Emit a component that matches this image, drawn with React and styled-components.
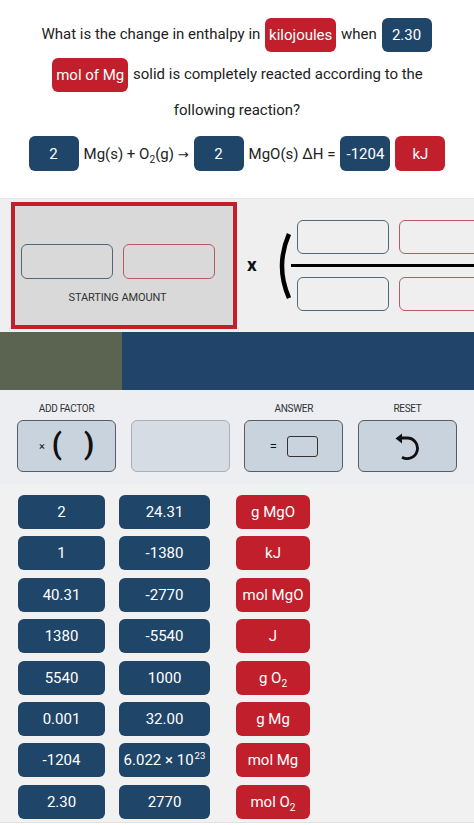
import React from "react";
import styled, { createGlobalStyle } from "styled-components";

const BLUE = "#1f4568";
const RED = "#c01f2b";

const GlobalStyle = createGlobalStyle`
  * { box-sizing: border-box; }
  body {
    margin: 0;
    background: #fff;
    font-family: Roboto, "Liberation Sans", Arial, sans-serif;
    color: #222;
  }
`;

const Page = styled.div`
  width: 474px;
  overflow: hidden;
`;

const Question = styled.section`
  background: #fff;
  padding: 15px 0 27px;
`;

const Prompt = styled.p`
  margin: 0;
  padding: 0 28px;
  text-align: center;
  font-size: 15px;
  line-height: 31px;
`;

const Chip = styled.span`
  display: inline-flex;
  align-items: center;
  justify-content: center;
  flex: none;
  min-width: 50px;
  height: 34px;
  padding: 0 4px;
  margin: 3px 1px;
  border-radius: 6px;
  vertical-align: middle;
  color: #fff;
  font-size: 15px;
  background: ${(p) => (p.$tone === "red" ? RED : BLUE)};
`;

const Equation = styled.div`
  display: flex;
  justify-content: center;
  align-items: center;
  gap: 5px;
  margin-top: 10px;
  font-size: 15px;
  white-space: nowrap;

  ${Chip} {
    margin: 0;
    height: 35px;
  }
`;

const EqText = styled.span`
  flex: none;
`;

const Arrow = styled.span`
  font-family: "DejaVu Sans", sans-serif;
  font-size: 13px;
`;

const Sub = styled.sub`
  font-size: 0.68em;
  line-height: 0;
  vertical-align: sub;
`;

const Workspace = styled.section`
  display: flex;
  align-items: center;
  height: 134px;
  padding-left: 11px;
  background: #efefef;
  border-top: 1px solid #e6e6e6;
  overflow: hidden;
`;

const StartBox = styled.div`
  flex: none;
  width: 226px;
  height: 127px;
  border: 4px solid ${RED};
  background: #d9d9d9;
  padding: 38px 0 0 6px;
`;

const StartInner = styled.div`
  width: 193px;
  display: flex;
  flex-direction: column;
  align-items: center;
`;

const SlotRow = styled.div`
  display: flex;
  gap: 10px;
`;

const Slot = styled.div`
  flex: none;
  width: 92px;
  height: 35px;
  border-radius: 6px;
  border: 1.5px solid ${(p) => (p.$tone === "red" ? "#b95a62" : "#52677b")};
`;

const SlotLabel = styled.div`
  margin-top: 12px;
  font-size: 11px;
  line-height: 14px;
  color: #333;
  letter-spacing: -0.1px;
`;

const Times = styled.div`
  flex: none;
  margin: 0 17px 0 10px;
  font-size: 19px;
  font-weight: 700;
  color: #111;
  line-height: 1;
  padding-bottom: 2px;
`;

const Fraction = styled.div`
  display: flex;
  align-items: center;
  flex: none;
`;

const FracBody = styled.div`
  display: flex;
  flex-direction: column;
  gap: 10px;
  width: 400px;

  ${SlotRow} {
    padding-left: 6px;
  }
  ${Slot} {
    height: 34px;
  }
`;

const FracLine = styled.div`
  height: 3px;
  background: #000;
`;

const Band = styled.div`
  display: flex;
  height: 58px;
  background: #21456a;
`;

const BandLeft = styled.div`
  width: 122px;
  background: #5a6451;
`;

const Controls = styled.section`
  display: grid;
  grid-template-columns: repeat(4, 1fr);
  column-gap: 14.5px;
  padding: 12px 17px 12px;
  background: #eceef1;
`;

const Control = styled.div`
  display: flex;
  flex-direction: column;
  align-items: stretch;
`;

const ControlLabel = styled.div`
  height: 14px;
  margin-bottom: 4px;
  text-align: center;
  font-size: 10px;
  line-height: 14px;
  letter-spacing: -0.3px;
  color: #333;
`;

const ControlButton = styled.button`
  display: flex;
  align-items: center;
  justify-content: center;
  height: 52px;
  padding: 0;
  border-radius: 6px;
  font-family: inherit;
  color: #111;
  background: ${(p) => (p.$disabled ? "#d6dce3" : "#c9d3dd")};
  border: 1.5px solid ${(p) => (p.$disabled ? "#a9b0b8" : "#555d66")};
`;

const SmallTimes = styled.span`
  font-size: 11px;
  margin-right: 7px;
`;

const Paren = styled.span`
  font-size: 29px;
  font-weight: 700;
  line-height: 1;
  margin-bottom: 3px;
`;

const ParenGap = styled.span`
  width: 22px;
`;

const Equals = styled.span`
  font-size: 13px;
  margin-right: 10px;
`;

const AnswerBox = styled.span`
  width: 31px;
  height: 21px;
  border: 1.5px solid #333;
  border-radius: 3px;
`;

const Keypad = styled.section`
  display: grid;
  grid-template-columns: 87px 91px 86px;
  grid-auto-rows: 34px;
  column-gap: 14px;
  row-gap: 7.4px;
  padding: 11px 0 3px 18px;
  background: #f1f1f1;
  border-bottom: 1px solid #e2e2e2;
`;

const Key = styled.button`
  display: flex;
  align-items: center;
  justify-content: center;
  padding: 0;
  border: none;
  border-radius: 6px;
  font-family: inherit;
  font-size: 15px;
  color: #fff;
  background: ${(p) => (p.$tone === "red" ? RED : BLUE)};
  margin-left: ${(p) => (p.$tone === "red" ? "12px" : "0")};
`;

const Sup = styled.sup`
  font-size: 0.64em;
  line-height: 0;
  vertical-align: super;
  margin-left: 1px;
`;

const O2 = () => (
  <>
    O<Sub>2</Sub>
  </>
);

const rows = [
  ["2", "24.31", "g MgO"],
  ["1", "-1380", "kJ"],
  ["40.31", "-2770", "mol MgO"],
  ["1380", "-5540", "J"],
  ["5540", "1000", <>g <O2 /></>],
  ["0.001", "32.00", "g Mg"],
  ["-1204", <>6.022 × 10<Sup>23</Sup></>, "mol Mg"],
  ["2.30", "2770", <>mol <O2 /></>],
];

const ParenIcon = () => (
  <svg width="17" height="70" viewBox="0 0 17 70" style={{ flex: "none" }}>
    <path d="M15 3 Q1 35 15 67" fill="none" stroke="#000" strokeWidth="4.5" />
  </svg>
);

const ResetIcon = () => (
  <svg width="24" height="27" viewBox="0 0 24 27">
    <path d="M5 5 H12 A10.3 10.3 0 1 1 7 24.2" fill="none" stroke="#111" strokeWidth="2.8" />
    <path d="M0.5 5.5 L7 0.5 L7 10.5 Z" fill="#111" />
  </svg>
);

export default function App() {
  return (
    <Page>
      <GlobalStyle />
      <Question>
        <Prompt>
          What is the change in enthalpy in <Chip $tone="red">kilojoules</Chip> when{" "}
          <Chip>2.30</Chip> <Chip $tone="red">mol of Mg</Chip> solid is completely reacted
          according to the following reaction?
        </Prompt>
        <Equation>
          <Chip>2</Chip>
          <EqText>
            Mg(s) + <O2 />(g) <Arrow>→</Arrow>
          </EqText>
          <Chip>2</Chip>
          <EqText>MgO(s) ΔH =</EqText>
          <Chip>-1204</Chip>
          <Chip $tone="red">kJ</Chip>
        </Equation>
      </Question>

      <Workspace>
        <StartBox>
          <StartInner>
            <SlotRow>
              <Slot />
              <Slot $tone="red" />
            </SlotRow>
            <SlotLabel>STARTING AMOUNT</SlotLabel>
          </StartInner>
        </StartBox>
        <Times>x</Times>
        <Fraction>
          <ParenIcon />
          <FracBody>
            <SlotRow>
              <Slot />
              <Slot $tone="red" />
            </SlotRow>
            <FracLine />
            <SlotRow>
              <Slot />
              <Slot $tone="red" />
            </SlotRow>
          </FracBody>
        </Fraction>
      </Workspace>

      <Band>
        <BandLeft />
      </Band>

      <Controls>
        <Control>
          <ControlLabel>ADD FACTOR</ControlLabel>
          <ControlButton>
            <SmallTimes>×</SmallTimes>
            <Paren>(</Paren>
            <ParenGap />
            <Paren>)</Paren>
          </ControlButton>
        </Control>
        <Control>
          <ControlLabel />
          <ControlButton $disabled />
        </Control>
        <Control>
          <ControlLabel>ANSWER</ControlLabel>
          <ControlButton>
            <Equals>=</Equals>
            <AnswerBox />
          </ControlButton>
        </Control>
        <Control>
          <ControlLabel>RESET</ControlLabel>
          <ControlButton>
            <ResetIcon />
          </ControlButton>
        </Control>
      </Controls>

      <Keypad>
        {rows.map((row, i) =>
          row.map((cell, j) => (
            <Key key={`${i}-${j}`} $tone={j === 2 ? "red" : "blue"}>
              <span>{cell}</span>
            </Key>
          ))
        )}
      </Keypad>
    </Page>
  );
}
